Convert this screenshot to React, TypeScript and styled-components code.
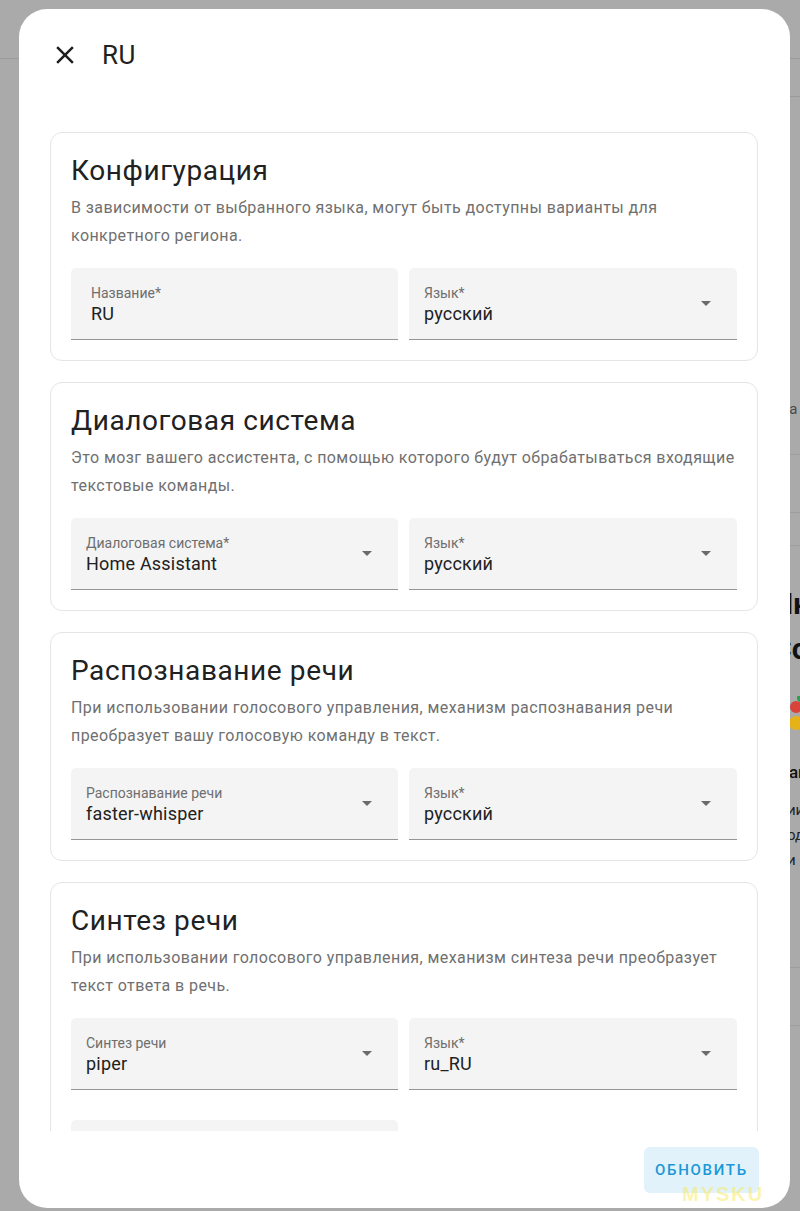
import React from 'react';
import styled, { createGlobalStyle } from 'styled-components';

const GlobalStyle = createGlobalStyle`
  * { box-sizing: border-box; }
  body {
    margin: 0;
    background: #aaaaaa;
    font-family: Roboto, "Noto Sans", "Liberation Sans", sans-serif;
    -webkit-font-smoothing: antialiased;
  }
`;

const Screen = styled.div`
  position: relative;
  width: 800px;
  height: 1211px;
  overflow: hidden;
  background: #aaaaaa;
`;

/* page that sits behind the scrim */
const Backdrop = styled.div`
  display: flex;
  flex-direction: column;
  height: 100%;
`;

const TopBar = styled.div`
  height: 59px;
  border-bottom: 1px solid #9b9b9b;
  flex-shrink: 0;
`;

const Layout = styled.div`
  display: grid;
  grid-template-columns: 772px 1fr;
  flex: 1;
`;

const SidePanel = styled.div`
  display: flex;
  flex-direction: column;
  white-space: nowrap;
  color: #222;
`;

const TabRow = styled.div`
  height: 38px;
  border-bottom: 1px solid #9b9b9b;
`;

const Spacer = styled.div<{ $h: number }>`
  height: ${(p) => p.$h}px;
  flex-shrink: 0;
`;

const SideText = styled.div<{ $size?: number; $weight?: number; $lh?: number; $color?: string }>`
  font-size: ${(p) => p.$size ?? 15}px;
  font-weight: ${(p) => p.$weight ?? 400};
  line-height: ${(p) => p.$lh ?? 24}px;
  color: ${(p) => p.$color ?? '#222'};
`;

const SideRule = styled.div<{ $h: number }>`
  height: ${(p) => p.$h}px;
  border-bottom: 1px solid #9d9d9d;
  flex-shrink: 0;
`;

/* dialog */
const Dialog = styled.div`
  position: absolute;
  left: 19px;
  top: 9px;
  width: 771px;
  height: 1199px;
  background: #ffffff;
  border-radius: 28px;
  display: flex;
  flex-direction: column;
  overflow: hidden;
`;

const Header = styled.div`
  height: 92px;
  flex-shrink: 0;
  display: flex;
  align-items: center;
  gap: 22px;
  padding: 0 31px;
`;

const CloseButton = styled.button`
  width: 30px;
  height: 30px;
  padding: 0;
  border: none;
  background: none;
  color: #212121;
  display: flex;
  align-items: center;
  justify-content: center;
  cursor: pointer;
`;

const Title = styled.h1`
  margin: 0;
  font-size: 26px;
  line-height: 32px;
  font-weight: 400;
  letter-spacing: 0.4px;
  color: #212121;
`;

const Content = styled.div`
  flex: 1;
  min-height: 0;
  overflow: hidden;
  padding: 31px 32px 0 31px;
  display: flex;
  flex-direction: column;
  gap: 21px;
`;

const Card = styled.section`
  flex-shrink: 0;
  border: 1px solid #e5e5e5;
  border-radius: 12px;
  padding: 20px 20px 20px;
`;

const CardTitle = styled.h2`
  margin: 0;
  font-size: 28px;
  line-height: 36px;
  font-weight: 400;
  letter-spacing: 0.6px;
  color: #212121;
`;

const CardText = styled.p`
  margin: 5px 0 18px;
  font-size: 16px;
  line-height: 28px;
  letter-spacing: 0.42px;
  color: #707070;
`;

const FieldRow = styled.div<{ $offset?: number }>`
  display: grid;
  grid-template-columns: 327px 328px;
  gap: 11px;
  margin-top: ${(p) => p.$offset ?? 0}px;
`;

const Field = styled.div<{ $pad: number }>`
  position: relative;
  height: 72px;
  background: #f4f4f4;
  border-radius: 5px 5px 0 0;
  border-bottom: 1px solid #959595;
  padding: 17px ${(p) => p.$pad}px 0;
`;

const Label = styled.div`
  font-size: 14px;
  line-height: 17px;
  color: #6e6e6e;
`;

const Value = styled.div`
  font-size: 18px;
  line-height: 24px;
  letter-spacing: 0.2px;
  color: #212121;
`;

const Arrow = styled.svg`
  position: absolute;
  right: 19px;
  top: 23px;
  width: 24px;
  height: 24px;
  fill: #6b6b6b;
`;

const Footer = styled.div`
  height: 77px;
  flex-shrink: 0;
  display: flex;
  justify-content: flex-end;
  align-items: flex-start;
  padding: 16px 31px 0;
`;

const PrimaryButton = styled.button`
  height: 46px;
  width: 115px;
  border: none;
  border-radius: 6px;
  background: #e1f2fb;
  color: #1b98d5;
  font-family: Roboto, "Noto Sans", sans-serif;
  font-size: 15px;
  font-weight: 500;
  letter-spacing: 1.7px;
  cursor: pointer;
`;

const Watermark = styled.div`
  position: absolute;
  left: 682px;
  top: 1183px;
  font-family: "Liberation Sans", sans-serif;
  font-weight: 700;
  font-size: 20px;
  letter-spacing: 2px;
  color: rgba(250, 232, 70, 0.45);
  pointer-events: none;
`;

type FieldDef = { label: string; value: string; select?: boolean };
type Section = { title: string; text: string; fields: FieldDef[]; extra?: boolean };

const sections: Section[] = [
  {
    title: 'Конфигурация',
    text: 'В зависимости от выбранного языка, могут быть доступны варианты для конкретного региона.',
    fields: [
      { label: 'Название*', value: 'RU' },
      { label: 'Язык*', value: 'русский', select: true },
    ],
  },
  {
    title: 'Диалоговая система',
    text: 'Это мозг вашего ассистента, с помощью которого будут обрабатываться входящие текстовые команды.',
    fields: [
      { label: 'Диалоговая система*', value: 'Home Assistant', select: true },
      { label: 'Язык*', value: 'русский', select: true },
    ],
  },
  {
    title: 'Распознавание речи',
    text: 'При использовании голосового управления, механизм распознавания речи преобразует вашу голосовую команду в текст.',
    fields: [
      { label: 'Распознавание речи', value: 'faster-whisper', select: true },
      { label: 'Язык*', value: 'русский', select: true },
    ],
  },
  {
    title: 'Синтез речи',
    text: 'При использовании голосового управления, механизм синтеза речи преобразует текст ответа в речь.',
    fields: [
      { label: 'Синтез речи', value: 'piper', select: true },
      { label: 'Язык*', value: 'ru_RU', select: true },
    ],
    extra: true,
  },
];

const SelectArrow = () => (
  <Arrow viewBox="0 0 24 24">
    <path d="M7 10l5 5 5-5z" />
  </Arrow>
);

const FormField: React.FC<FieldDef> = ({ label, value, select }) => (
  <Field $pad={select ? 15 : 20}>
    <Label>{label}</Label>
    <Value>{value}</Value>
    {select && <SelectArrow />}
  </Field>
);

const BehindPage = () => (
  <Backdrop>
    <TopBar />
    <Layout>
      <div />
      <SidePanel>
        <TabRow />
        <Spacer $h={300} />
        <SideText $color="#4a4a4a">пла</SideText>
        <SideRule $h={34} />
        <SideRule $h={58} />
        <SideRule $h={33} />
        <Spacer $h={35} />
        <SideText $size={30} $weight={700} $lh={45} $color="#111">Нн</SideText>
        <SideText $size={30} $weight={700} $lh={45} $color="#111">Сс</SideText>
        <Spacer $h={25} />
        <svg width="28" height="36" viewBox="0 0 28 36">
          <circle cx="24" cy="11" r="6" fill="#d9443a" />
          <circle cx="29" cy="2" r="4" fill="#2e9e4f" />
          <circle cx="24" cy="27" r="7" fill="#e5b21a" />
        </svg>
        <Spacer $h={28} />
        <SideText $size={17} $weight={500} $lh={24} $color="#111">&nbsp;&nbsp;&nbsp;&nbsp;ап</SideText>
        <Spacer $h={14} />
        <SideText $lh={25} $color="#222">&nbsp;&nbsp;&nbsp;&nbsp;ии</SideText>
        <SideText $lh={25} $color="#222">&nbsp;&nbsp;&nbsp;&nbsp;од</SideText>
        <SideText $lh={25} $color="#222">&nbsp;&nbsp;&nbsp;&nbsp;и</SideText>
        <SideRule $h={95} />
        <SideRule $h={58} />
      </SidePanel>
    </Layout>
  </Backdrop>
);

const App: React.FC = () => {
  return (
    <>
      <GlobalStyle />
      <Screen>
        <BehindPage />
        <Dialog>
          <Header>
            <CloseButton aria-label="Закрыть">
              <svg width="30" height="30" viewBox="0 0 24 24" fill="currentColor">
                <path d="M19 6.41L17.59 5 12 10.59 6.41 5 5 6.41 10.59 12 5 17.59 6.41 19 12 13.41 17.59 19 19 17.59 13.41 12z" />
              </svg>
            </CloseButton>
            <Title>RU</Title>
          </Header>
          <Content>
            {sections.map((s) => (
              <Card key={s.title}>
                <CardTitle>{s.title}</CardTitle>
                <CardText>{s.text}</CardText>
                <FieldRow>
                  {s.fields.map((f) => (
                    <FormField key={f.label + f.value} {...f} />
                  ))}
                </FieldRow>
                {s.extra && (
                  <FieldRow $offset={30}>
                    <FormField label="Голос" value="" select />
                  </FieldRow>
                )}
              </Card>
            ))}
          </Content>
          <Footer>
            <PrimaryButton>ОБНОВИТЬ</PrimaryButton>
          </Footer>
        </Dialog>
        <Watermark>MYSKU</Watermark>
      </Screen>
    </>
  );
};

export default App;
